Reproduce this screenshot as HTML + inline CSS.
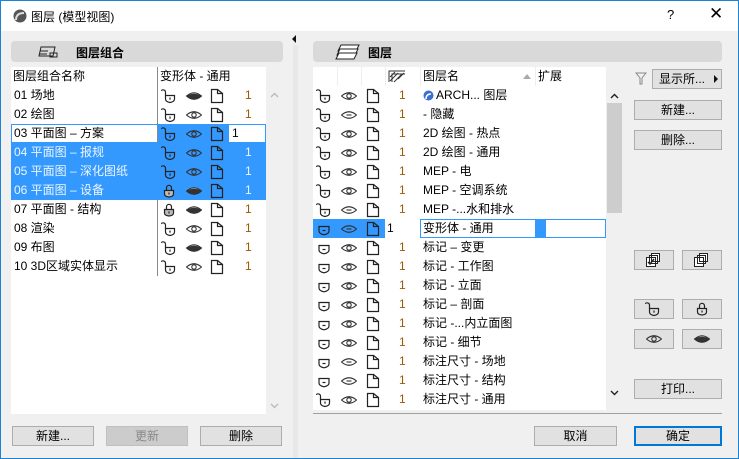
<!DOCTYPE html>
<html><head><meta charset="utf-8"><style>
*{box-sizing:border-box;margin:0;padding:0}
body{width:739px;height:459px;overflow:hidden;font:12px "Liberation Sans","Noto Sans CJK SC",sans-serif;color:#000;background:#f0f0f0;position:relative}
.a{position:absolute}
.win{left:0;top:0;width:739px;height:459px;border:1px solid #1883d7}
.title{left:1px;top:1px;width:737px;height:30px;background:#fff}
.bar{background:#d9d9d9;border-radius:4px;height:21px}
.list{background:#fff}
.row{position:absolute;height:19px;line-height:19px;white-space:nowrap}
.btn{position:absolute;height:20px;border:1px solid #adadad;background:#e1e1e1;text-align:center;line-height:18px}
.n{color:#9a5a00}
svg{position:absolute}
.sel{background:#3399ff}
.w{color:#eef5ff}
</style></head><body>
<svg width="0" height="0" style="position:absolute">
<defs>
<g id="ul" fill="none" stroke="#222" stroke-width="1.2"><path d="M4.5 7.5h9v3.5q0 2.8-4.5 3.5q-4.5-.7-4.5-3.5z"/><path d="M4.5 7.5V4a2.4 2.4 0 0 0-4.3-1.2"/><path d="M9 9.5v2.2"/></g>
<g id="lk" stroke="#222" stroke-width="1.2"><path d="M5.5 7V4.8a2.5 2.5 0 0 1 5 0V7" fill="none"/><path d="M3.5 7.5h9v3.5q0 2.5-4.5 3q-4.5-.5-4.5-3z" fill="#bbb"/><path d="M8 9.5v2"/></g>
<g id="sh" fill="none" stroke="#222" stroke-width="1.2"><path d="M3 5.5h10v4.5q0 2.8-5 3.8q-5-1-5-3.8z"/><path d="M6.5 9.5h3"/></g>
<g id="ey" fill="none" stroke="#333" stroke-width="1.1"><path d="M0.5 8q7.5-6.5 15 0q-7.5 6.5-15 0z"/><circle cx="8" cy="8" r="2.2"/></g>
<g id="eh" stroke="#333" stroke-width="1"><path d="M0.5 8q7.5-6.5 15 0q-7.5 6.5-15 0z" fill="#ccc"/><path d="M0.5 8q7.5-3.5 15 0q-7.5 6.5-15 0z" fill="#333"/></g>
<g id="eo" fill="none" stroke="#333" stroke-width="1.1"><path d="M0.5 8q7.5-6.5 15 0q-7.5 6.5-15 0z"/><path d="M5.5 8h5"/></g>
<g id="dc" fill="none" stroke="#222" stroke-width="1.2"><path d="M2.5 1.5h6v4h5v9h-11z"/><path d="M8.5 1.5l5 4"/></g>
<symbol id="up" viewBox="0 0 9 6"><path d="M1 5l3.5-3.5L8 5" fill="none" stroke="currentColor" stroke-width="1.4"/></symbol>
</defs></svg>
<div class="a win"></div>
<div class="a title"></div>
<svg style="left:13px;top:9px" width="14" height="14"><circle cx="7" cy="7" r="6.5" fill="#555"/><path d="M3 11q0-7 8-7" stroke="#ddd" stroke-width="2" fill="none"/></svg>
<div class="a" style="left:31px;top:8px">图层 (模型视图)</div>
<div class="a" style="left:667px;top:7px;font-size:13px">?</div>
<div class="a" style="left:709px;top:4px;font-size:17px">✕</div>
<div class="a" style="left:292px;top:35px;width:0;height:0;border:4px solid transparent;border-right:4px solid #111;border-left:0"></div>

<!-- left -->
<div class="a bar" style="left:11px;top:41px;width:272px"></div>
<svg style="left:36px;top:44px" width="26" height="16" fill="none" stroke="#222"><path d="M5 3h14l-2 9H3z"/><path d="M4 7h8M3 10h8M14 9h7v4h-7z"/></svg>
<div class="a" style="left:76px;top:44px;font-weight:bold">图层组合</div>
<div class="a list" style="left:11px;top:67px;width:255px;height:347px"></div>
<div class="a" style="left:157px;top:67px;width:1px;height:209px;background:#888"></div>
<div class="row" style="left:13px;top:67px">图层组合名称</div>
<div class="row" style="left:160px;top:67px">变形体 - 通用</div>
<div class="a" style="left:266px;top:67px;width:17px;height:347px;background:#f0f0f0"></div>
<svg style="left:270px;top:92px;color:#bbb" width="9" height="6"><use href="#up"/></svg>
<svg style="left:270px;top:403px;color:#bbb;transform:scaleY(-1)" width="9" height="6"><use href="#up"/></svg>

<div class="a" style="left:11px;top:124px;width:255px;height:19px;border:1px solid #3399ff"></div>
<div class="a sel" style="left:158px;top:124px;width:71px;height:19px"></div>
<div class="a sel" style="left:11px;top:143px;width:255px;height:57px"></div>

<div class="row" style="left:14px;top:86px">01 场地</div>
<div class="row" style="left:14px;top:105px">02 绘图</div>
<div class="row" style="left:14px;top:124px">03 平面图 – 方案</div>
<div class="row w" style="left:14px;top:143px">04 平面图 – 报规</div>
<div class="row w" style="left:14px;top:162px">05 平面图 – 深化图纸</div>
<div class="row w" style="left:14px;top:181px">06 平面图 – 设备</div>
<div class="row" style="left:14px;top:200px">07 平面图 - 结构</div>
<div class="row" style="left:14px;top:219px">08 渲染</div>
<div class="row" style="left:14px;top:238px">09 布图</div>
<div class="row" style="left:14px;top:257px">10 3D区域实体显示</div>

<svg style="left:161px;top:88px" width="16" height="16"><use href="#ul"/></svg><svg style="left:186px;top:88px" width="16" height="16"><use href="#eh"/></svg><svg style="left:209px;top:88px" width="16" height="16"><use href="#dc"/></svg><div class="row n" style="left:245px;top:86px">1</div>
<svg style="left:161px;top:107px" width="16" height="16"><use href="#ul"/></svg><svg style="left:186px;top:107px" width="16" height="16"><use href="#ey"/></svg><svg style="left:209px;top:107px" width="16" height="16"><use href="#dc"/></svg><div class="row n" style="left:245px;top:105px">1</div>
<svg style="left:161px;top:126px" width="16" height="16"><use href="#ul"/></svg><svg style="left:186px;top:126px" width="16" height="16"><use href="#ey"/></svg><svg style="left:209px;top:126px" width="16" height="16"><use href="#dc"/></svg><div class="row" style="left:232px;top:124px">1</div>
<svg style="left:161px;top:145px" width="16" height="16"><use href="#ul"/></svg><svg style="left:186px;top:145px" width="16" height="16"><use href="#ey"/></svg><svg style="left:209px;top:145px" width="16" height="16"><use href="#dc"/></svg><div class="row w" style="left:245px;top:143px">1</div>
<svg style="left:161px;top:164px" width="16" height="16"><use href="#ul"/></svg><svg style="left:186px;top:164px" width="16" height="16"><use href="#ey"/></svg><svg style="left:209px;top:164px" width="16" height="16"><use href="#dc"/></svg><div class="row w" style="left:245px;top:162px">1</div>
<svg style="left:161px;top:183px" width="16" height="16"><use href="#lk"/></svg><svg style="left:186px;top:183px" width="16" height="16"><use href="#eh"/></svg><svg style="left:209px;top:183px" width="16" height="16"><use href="#dc"/></svg><div class="row w" style="left:245px;top:181px">1</div>
<svg style="left:161px;top:202px" width="16" height="16"><use href="#lk"/></svg><svg style="left:186px;top:202px" width="16" height="16"><use href="#eh"/></svg><svg style="left:209px;top:202px" width="16" height="16"><use href="#dc"/></svg><div class="row n" style="left:245px;top:200px">1</div>
<svg style="left:161px;top:221px" width="16" height="16"><use href="#ul"/></svg><svg style="left:186px;top:221px" width="16" height="16"><use href="#ey"/></svg><svg style="left:209px;top:221px" width="16" height="16"><use href="#dc"/></svg><div class="row n" style="left:245px;top:219px">1</div>
<svg style="left:161px;top:240px" width="16" height="16"><use href="#ul"/></svg><svg style="left:186px;top:240px" width="16" height="16"><use href="#eh"/></svg><svg style="left:209px;top:240px" width="16" height="16"><use href="#dc"/></svg><div class="row n" style="left:245px;top:238px">1</div>
<svg style="left:161px;top:259px" width="16" height="16"><use href="#ul"/></svg><svg style="left:186px;top:259px" width="16" height="16"><use href="#ey"/></svg><svg style="left:209px;top:259px" width="16" height="16"><use href="#dc"/></svg><div class="row n" style="left:245px;top:257px">1</div>

<div class="btn" style="left:12px;top:426px;width:82px">新建...</div>
<div class="btn" style="left:106px;top:426px;width:82px;background:#cccccc;border-color:#bfbfbf;color:#888">更新</div>
<div class="btn" style="left:200px;top:426px;width:82px">删除</div>

<div class="a" style="left:293px;top:45px;width:5px;height:413px;background:#e8e8e8"></div>

<!-- right -->
<div class="a bar" style="left:313px;top:41px;width:409px"></div>
<svg style="left:334px;top:43px" width="28" height="18" fill="#fff" stroke="#222"><path d="M7 2h18l-3 6H4z"/><path d="M6 6h18l-3 6H3z"/><path d="M5 10h18l-3 6H2z"/></svg>
<div class="a" style="left:368px;top:44px;font-weight:bold">图层</div>
<div class="a list" style="left:313px;top:67px;width:293px;height:343px"></div>
<div class="a" style="left:337px;top:67px;width:1px;height:19px;background:#eee"></div>
<div class="a" style="left:361px;top:67px;width:1px;height:19px;background:#eee"></div>
<div class="a" style="left:385px;top:67px;width:1px;height:19px;background:#eee"></div>
<div class="a" style="left:420px;top:67px;width:1px;height:19px;background:#eee"></div>
<div class="a" style="left:535px;top:67px;width:1px;height:19px;background:#eee"></div>
<svg style="left:388px;top:70px" width="18" height="13" fill="none" stroke="#333"><path d="M1 12V1h16M4 12V4h13M2 7l5-5M2 11l8-8M6 12l8-8M10 9l6-6"/></svg>
<div class="row" style="left:423px;top:67px">图层名</div>
<div class="a" style="left:523px;top:74px;border:4px solid transparent;border-bottom:5px solid #aaa;border-top:0"></div>
<div class="row" style="left:538px;top:67px">扩展</div>
<div class="a" style="left:607px;top:86px;width:15px;height:324px;background:#f0f0f0"></div>
<div class="a" style="left:607px;top:103px;width:15px;height:110px;background:#cdcdcd"></div>
<svg style="left:610px;top:93px;color:#222" width="9" height="6"><use href="#up"/></svg>
<svg style="left:610px;top:390px;color:#222;transform:scaleY(-1)" width="9" height="6"><use href="#up"/></svg>

<div class="a sel" style="left:313px;top:219px;width:293px;height:19px"></div>
<div class="a" style="left:385px;top:219px;width:35px;height:19px;background:#fff"></div>
<div class="a" style="left:420px;top:219px;width:116px;height:19px;background:#fff;border:1px solid #3399ff"></div>
<div class="a" style="left:545px;top:219px;width:61px;height:19px;background:#fff;border:1px solid #3399ff"></div>

<div class="a" style="left:313px;top:86px;width:293px;height:324px;overflow:hidden">
<div style="position:relative">
<svg style="left:3px;top:2px" width="16" height="16"><use href="#ul"/></svg><svg style="left:28px;top:2px" width="16" height="16"><use href="#ey"/></svg><svg style="left:52px;top:2px" width="16" height="16"><use href="#dc"/></svg><div class="row n" style="left:86px;top:0">1</div><svg style="left:110px;top:4px" width="11" height="11"><circle cx="5.5" cy="5.5" r="5" fill="#3a6fd0"/><path d="M3 9q0-5 5-5" stroke="#fff" stroke-width="1.5" fill="none"/></svg><div class="row" style="left:123px;top:0">ARCH... 图层</div>
<svg style="left:3px;top:21px" width="16" height="16"><use href="#ul"/></svg><svg style="left:28px;top:21px" width="16" height="16"><use href="#eo"/></svg><svg style="left:52px;top:21px" width="16" height="16"><use href="#dc"/></svg><div class="row n" style="left:86px;top:19px">1</div><div class="row" style="left:110px;top:19px">- 隐藏</div>
<svg style="left:3px;top:40px" width="16" height="16"><use href="#ul"/></svg><svg style="left:28px;top:40px" width="16" height="16"><use href="#ey"/></svg><svg style="left:52px;top:40px" width="16" height="16"><use href="#dc"/></svg><div class="row n" style="left:86px;top:38px">1</div><div class="row" style="left:110px;top:38px">2D 绘图 - 热点</div>
<svg style="left:3px;top:59px" width="16" height="16"><use href="#ul"/></svg><svg style="left:28px;top:59px" width="16" height="16"><use href="#ey"/></svg><svg style="left:52px;top:59px" width="16" height="16"><use href="#dc"/></svg><div class="row n" style="left:86px;top:57px">1</div><div class="row" style="left:110px;top:57px">2D 绘图 - 通用</div>
<svg style="left:3px;top:78px" width="16" height="16"><use href="#ul"/></svg><svg style="left:28px;top:78px" width="16" height="16"><use href="#ey"/></svg><svg style="left:52px;top:78px" width="16" height="16"><use href="#dc"/></svg><div class="row n" style="left:86px;top:76px">1</div><div class="row" style="left:110px;top:76px">MEP - 电</div>
<svg style="left:3px;top:97px" width="16" height="16"><use href="#ul"/></svg><svg style="left:28px;top:97px" width="16" height="16"><use href="#ey"/></svg><svg style="left:52px;top:97px" width="16" height="16"><use href="#dc"/></svg><div class="row n" style="left:86px;top:95px">1</div><div class="row" style="left:110px;top:95px">MEP - 空调系统</div>
<svg style="left:3px;top:116px" width="16" height="16"><use href="#ul"/></svg><svg style="left:28px;top:116px" width="16" height="16"><use href="#eo"/></svg><svg style="left:52px;top:116px" width="16" height="16"><use href="#dc"/></svg><div class="row n" style="left:86px;top:114px">1</div><div class="row" style="left:110px;top:114px">MEP -...水和排水</div>
<svg style="left:3px;top:135px" width="16" height="16"><use href="#sh"/></svg><svg style="left:28px;top:135px" width="16" height="16"><use href="#eo"/></svg><svg style="left:52px;top:135px" width="16" height="16"><use href="#dc"/></svg><div class="row" style="left:74px;top:133px">1</div><div class="row" style="left:110px;top:133px">变形体 - 通用</div>
<svg style="left:3px;top:154px" width="16" height="16"><use href="#sh"/></svg><svg style="left:28px;top:154px" width="16" height="16"><use href="#ey"/></svg><svg style="left:52px;top:154px" width="16" height="16"><use href="#dc"/></svg><div class="row n" style="left:86px;top:152px">1</div><div class="row" style="left:110px;top:152px">标记 – 变更</div>
<svg style="left:3px;top:173px" width="16" height="16"><use href="#sh"/></svg><svg style="left:28px;top:173px" width="16" height="16"><use href="#ey"/></svg><svg style="left:52px;top:173px" width="16" height="16"><use href="#dc"/></svg><div class="row n" style="left:86px;top:171px">1</div><div class="row" style="left:110px;top:171px">标记 - 工作图</div>
<svg style="left:3px;top:192px" width="16" height="16"><use href="#sh"/></svg><svg style="left:28px;top:192px" width="16" height="16"><use href="#ey"/></svg><svg style="left:52px;top:192px" width="16" height="16"><use href="#dc"/></svg><div class="row n" style="left:86px;top:190px">1</div><div class="row" style="left:110px;top:190px">标记 - 立面</div>
<svg style="left:3px;top:211px" width="16" height="16"><use href="#sh"/></svg><svg style="left:28px;top:211px" width="16" height="16"><use href="#ey"/></svg><svg style="left:52px;top:211px" width="16" height="16"><use href="#dc"/></svg><div class="row n" style="left:86px;top:209px">1</div><div class="row" style="left:110px;top:209px">标记 – 剖面</div>
<svg style="left:3px;top:230px" width="16" height="16"><use href="#sh"/></svg><svg style="left:28px;top:230px" width="16" height="16"><use href="#ey"/></svg><svg style="left:52px;top:230px" width="16" height="16"><use href="#dc"/></svg><div class="row n" style="left:86px;top:228px">1</div><div class="row" style="left:110px;top:228px">标记 -...内立面图</div>
<svg style="left:3px;top:249px" width="16" height="16"><use href="#sh"/></svg><svg style="left:28px;top:249px" width="16" height="16"><use href="#ey"/></svg><svg style="left:52px;top:249px" width="16" height="16"><use href="#dc"/></svg><div class="row n" style="left:86px;top:247px">1</div><div class="row" style="left:110px;top:247px">标记 - 细节</div>
<svg style="left:3px;top:268px" width="16" height="16"><use href="#sh"/></svg><svg style="left:28px;top:268px" width="16" height="16"><use href="#eo"/></svg><svg style="left:52px;top:268px" width="16" height="16"><use href="#dc"/></svg><div class="row n" style="left:86px;top:266px">1</div><div class="row" style="left:110px;top:266px">标注尺寸 - 场地</div>
<svg style="left:3px;top:287px" width="16" height="16"><use href="#sh"/></svg><svg style="left:28px;top:287px" width="16" height="16"><use href="#eo"/></svg><svg style="left:52px;top:287px" width="16" height="16"><use href="#dc"/></svg><div class="row n" style="left:86px;top:285px">1</div><div class="row" style="left:110px;top:285px">标注尺寸 - 结构</div>
<svg style="left:3px;top:306px" width="16" height="16"><use href="#ul"/></svg><svg style="left:28px;top:306px" width="16" height="16"><use href="#ey"/></svg><svg style="left:52px;top:306px" width="16" height="16"><use href="#dc"/></svg><div class="row n" style="left:86px;top:304px">1</div><div class="row" style="left:110px;top:304px">标注尺寸 - 通用</div>
</div></div>

<svg style="left:635px;top:71px" width="12" height="14" fill="none" stroke="#888"><path d="M1 2h10L7 7v6H5V7z"/></svg>
<div class="btn" style="left:652px;top:69px;width:70px;text-align:left;padding-left:6px">显示所...</div>
<div class="a" style="left:714px;top:75px;border:4px solid transparent;border-left:4px solid #111;border-right:0"></div>
<div class="btn" style="left:634px;top:100px;width:88px">新建...</div>
<div class="btn" style="left:634px;top:130px;width:88px">删除...</div>
<div class="btn" style="left:634px;top:250px;width:40px"></div>
<div class="btn" style="left:682px;top:250px;width:40px"></div>
<svg style="left:645px;top:252px" width="16" height="16" fill="#fff" stroke="#222"><path d="M6.5 1.5h8v8h-8zM4.5 3.5h8v8h-8zM1.5 5.5h9v9h-9z"/><path d="M3 10l2 2 4-5" stroke-width="1.5" fill="none"/></svg>
<svg style="left:693px;top:252px" width="16" height="16" fill="#fff" stroke="#222"><path d="M6.5 1.5h8v8h-8zM4.5 3.5h8v8h-8zM1.5 5.5h9v9h-9z"/></svg>
<div class="btn" style="left:634px;top:299px;width:40px"></div>
<div class="btn" style="left:682px;top:299px;width:40px"></div>
<svg style="left:645px;top:301px" width="16" height="16"><use href="#ul"/></svg>
<svg style="left:694px;top:301px" width="16" height="16" fill="none" stroke="#222" stroke-width="1.2"><path d="M5.5 7V4.8a2.5 2.5 0 0 1 5 0V7"/><path d="M3.5 7.5h9v3.5q0 2.5-4.5 3q-4.5-.5-4.5-3z"/><path d="M8 9.5v2"/></svg>
<div class="btn" style="left:634px;top:329px;width:40px"></div>
<div class="btn" style="left:682px;top:329px;width:40px"></div>
<svg style="left:646px;top:331px" width="16" height="16"><use href="#ey"/></svg>
<svg style="left:694px;top:331px" width="16" height="16"><use href="#eh"/></svg>
<div class="btn" style="left:634px;top:379px;width:88px">打印...</div>
<div class="a" style="left:313px;top:413px;width:409px;height:1px;background:#a0a0a0"></div>
<div class="btn" style="left:534px;top:426px;width:83px">取消</div>
<div class="btn" style="left:634px;top:426px;width:88px;border:2px solid #0078d7;line-height:16px">确定</div>
</body></html>
